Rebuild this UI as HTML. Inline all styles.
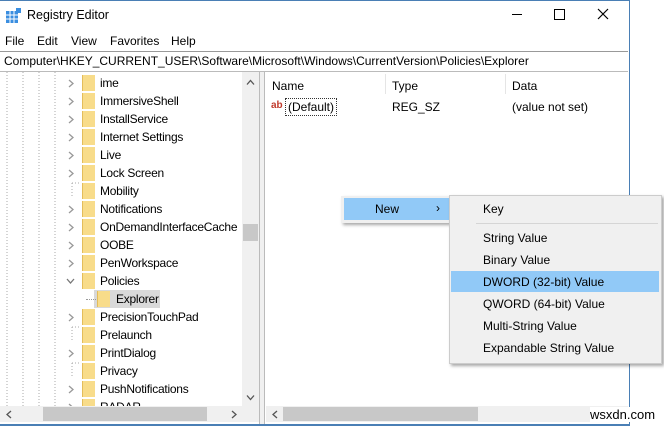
<!DOCTYPE html><html><head><style>
body{margin:0;width:664px;height:426px;background:#fff;font-family:"Liberation Sans",sans-serif;font-size:12px;color:#000;position:relative;overflow:hidden}
.a{position:absolute;white-space:nowrap}
.fold{position:absolute;width:12px;height:16px;background:#f8dc8a;border-left:1px solid #e4bd5a}
.chev{position:absolute}
.mi{position:absolute;left:483px}
#tree .t{letter-spacing:-0.25px}
</style></head><body>
<div class="a" style="left:0;top:0;width:629px;height:424px;border-right:1px solid #4a7fb5;border-bottom:2px solid #4a7fb5"></div>
<div class="a" style="left:0;top:0;width:629px;height:1px;background:#4a7fb5"></div>
<svg class="a" style="left:6px;top:8px" width="16" height="16"><rect x="0" y="3" width="12" height="12" fill="#3a8ee0"/><path d="M0 7h12M0 11h12M4 3v12M8 3v12" stroke="#fff"/><rect x="10" y="0" width="5" height="5" fill="#3a8ee0"/></svg>
<div class="a" style="left:27px;top:8px;font-size:12.5px">Registry Editor</div>
<div class="a" style="left:512px;top:14px;width:10px;height:1px;background:#000"></div>
<div class="a" style="left:554px;top:9px;width:9px;height:9px;border:1px solid #000"></div>
<svg class="a" style="left:597px;top:8px" width="12" height="12"><path d="M1 1L11 11M11 1L1 11" stroke="#000" stroke-width="1.2"/></svg>
<div class="a" style="left:5px;top:34px">File</div><div class="a" style="left:37px;top:34px">Edit</div><div class="a" style="left:71px;top:34px">View</div><div class="a" style="left:110px;top:34px">Favorites</div><div class="a" style="left:171px;top:34px">Help</div>
<div class="a" style="left:0;top:51px;width:628px;height:19px;border-top:1px solid #999;border-bottom:1px solid #bbb"></div>
<div class="a" style="left:4px;top:54px">Computer\HKEY_CURRENT_USER\Software\Microsoft\Windows\CurrentVersion\Policies\Explorer</div>
<div class="a" style="left:259px;top:72px;width:4px;height:352px;background:#f0f0f0;border-left:1px solid #bbb;border-right:1px solid #bbb"></div>
<svg class="a" style="left:0;top:72px" width="80" height="334"><path d="M7 0v334M23 0v334M39 0v334M55 0v334" stroke="#aaa" stroke-dasharray="1,2"/><path d="M72 111v14M72 255v14M72 291v14M72 111h8M72 255h8M72 291h8" stroke="#aaa" stroke-dasharray="1,2"/></svg>
<div id="tree"></div>
<script>
var items=["ime","ImmersiveShell","InstallService","Internet Settings","Live","Lock Screen","Mobility","Notifications","OnDemandInterfaceCache","OOBE","PenWorkspace","Policies","Explorer","PrecisionTouchPad","Prelaunch","PrintDialog","Privacy","PushNotifications","RADAR"];
var noChev={Mobility:1,Prelaunch:1,Privacy:1};var h="";
items.forEach(function(t,i){var y=75+i*18;
if(t=="Explorer"){h+='<div class="a" style="left:94px;top:'+(y-1)+'px;width:66px;height:18px;background:#d9d9d9"></div><div class="a" style="left:86px;top:'+(y+8)+'px;width:10px;border-top:1px dotted #999"></div><div class="fold" style="left:97px;top:'+y+'px"></div><div class="a t" style="left:116px;top:'+(y+1)+'px">'+t+'</div>';return;}
if(!noChev[t])h+=(t=="Policies"?'<svg class="chev" style="left:66px;top:'+(y+5)+'px" width="9" height="7"><path d="M1 1l3.5 4 3.5-4" stroke="#777" stroke-width="1.3" fill="none"/></svg>':'<svg class="chev" style="left:68px;top:'+(y+4)+'px" width="7" height="9"><path d="M1 1l4 3.5-4 3.5" stroke="#999" stroke-width="1.3" fill="none"/></svg>');
h+='<div class="fold" style="left:82px;top:'+y+'px"></div><div class="a t" style="left:100px;top:'+(y+1)+'px">'+t+'</div>';});
document.getElementById("tree").innerHTML=h;
</script>
<div class="a" style="left:242px;top:72px;width:17px;height:334px;background:#f0f0f0"></div>
<div class="a" style="left:243px;top:224px;width:15px;height:17px;background:#c8c8c8"></div>
<svg class="a" style="left:246px;top:79px" width="9" height="7"><path d="M1 5.5l3.5-4 3.5 4" stroke="#555" stroke-width="1.3" fill="none"/></svg>
<svg class="a" style="left:246px;top:394px" width="9" height="7"><path d="M1 1.5l3.5 4 3.5-4" stroke="#555" stroke-width="1.3" fill="none"/></svg>
<div class="a" style="left:0;top:406px;width:259px;height:16px;background:#f0f0f0"></div>
<div class="a" style="left:43px;top:407px;width:164px;height:14px;background:#c8c8c8"></div>
<svg class="a" style="left:6px;top:410px" width="7" height="9"><path d="M5 1L1 4.5 5 8" stroke="#555" stroke-width="1.3" fill="none"/></svg>
<svg class="a" style="left:231px;top:410px" width="7" height="9"><path d="M1 1l4 3.5-4 3.5" stroke="#555" stroke-width="1.3" fill="none"/></svg>
<div class="a" style="left:266px;top:406px;width:362px;height:16px;background:#f0f0f0"></div>
<div class="a" style="left:283px;top:407px;width:195px;height:14px;background:#c8c8c8"></div>
<svg class="a" style="left:272px;top:410px" width="7" height="9"><path d="M5 1L1 4.5 5 8" stroke="#555" stroke-width="1.3" fill="none"/></svg>
<div class="a" style="left:272px;top:79px">Name</div><div class="a" style="left:392px;top:79px">Type</div><div class="a" style="left:512px;top:79px">Data</div>
<div class="a" style="left:385px;top:74px;width:1px;height:20px;background:#e5e5e5"></div><div class="a" style="left:505px;top:74px;width:1px;height:20px;background:#e5e5e5"></div>
<div class="a" style="left:271px;top:100px;color:#c0392b;font-weight:bold;font-size:10px">ab</div>
<div class="a" style="left:285px;top:98px;border:1px dotted #333;padding:1px 2px">(Default)</div>
<div class="a" style="left:392px;top:100px">REG_SZ</div><div class="a" style="left:512px;top:100px">(value not set)</div>
<div class="a" style="left:341px;top:196px;width:108px;height:27px;background:#f0f0f0;box-shadow:2px 2px 3px rgba(0,0,0,.35)"></div>
<div class="a" style="left:344px;top:198px;width:105px;height:22px;background:#91c9f7"></div>
<div class="a" style="left:375px;top:202px">New</div><div class="a" style="left:436px;top:201px">›</div>
<div class="a" style="left:449px;top:195px;width:211px;height:167px;background:#f0f0f0;border:1px solid #ccc;box-shadow:2px 2px 3px rgba(0,0,0,.35)"></div>
<div class="a" style="left:476px;top:223px;width:182px;height:1px;background:#d5d5d5"></div>
<div class="a" style="left:451px;top:271px;width:208px;height:21px;background:#91c9f7"></div>
<div class="mi a" style="top:202px">Key</div><div class="mi a" style="top:231px">String Value</div><div class="mi a" style="top:253px">Binary Value</div><div class="mi a" style="top:275px">DWORD (32-bit) Value</div><div class="mi a" style="top:297px">QWORD (64-bit) Value</div><div class="mi a" style="top:319px">Multi-String Value</div><div class="mi a" style="top:341px">Expandable String Value</div>
<div class="a" style="left:590px;top:407px;font-size:13px;background:#fff">wsxdn.com</div>
</body></html>
